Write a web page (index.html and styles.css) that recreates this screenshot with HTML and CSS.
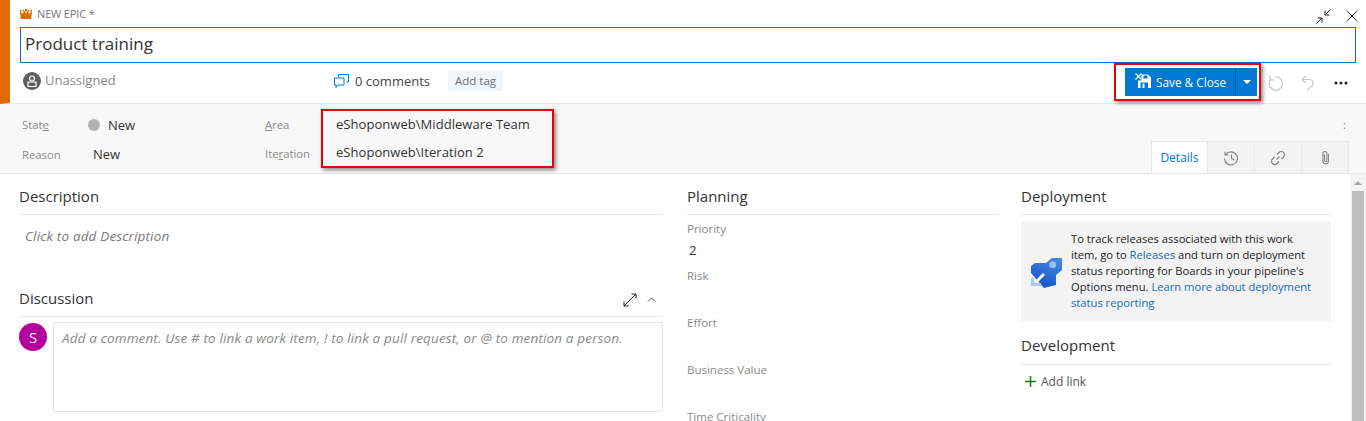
FILE: index.html
```html
<!DOCTYPE html>
<html lang="en">
<head>
<meta charset="utf-8">
<title>New Epic</title>
<link rel="stylesheet" href="styles.css">
</head>
<body>
<div class="page">
  <header class="header">
    <div class="toprow">
      <svg class="crown" width="12" height="10" viewBox="0 0 12 10"><path fill="#e06c00" d="M0 2.500L3 4.800 4 2 6 4 8 2 9 4.800 12 2.500 11.200 10H.8z"/><path fill="#e06c00" d="M5 0h2v2.500H5zM0 .8h1.500v2H0zM10.500 .8H12v2h-1.500zM2.800 .8h1.500v2H2.800zM7.700 .8h1.500v2H7.700z"/></svg>
      <span class="kind">NEW EPIC *</span>
      <span class="grow"></span>
      <svg class="winicon expandicon" width="15" height="15" viewBox="0 0 15 15"><path fill="none" stroke="#222" d="M14.500 .5L9 6M9 1.500V6h4.500M.5 14.500L6 9M1.500 9H6v4.500"/></svg>
      <svg class="winicon closeicon" width="12" height="12" viewBox="0 0 12 12"><path fill="none" stroke="#333" d="M.5.5l11 11M11.500.5l-11 11"/></svg>
    </div>
    <div class="title">Product training</div>
    <div class="metarow">
      <svg class="avatar" width="18" height="18" viewBox="0 0 18 18"><circle cx="9" cy="9" r="9" fill="#5f5f5f"/><circle cx="9" cy="6.500" r="2.500" fill="none" stroke="#fff" stroke-width="1.200"/><path fill="none" stroke="#fff" stroke-width="1.200" d="M5 10h8v4.500H5z"/></svg>
      <span class="assignee">Unassigned</span>
      <div class="comments">
        <svg width="15" height="15" viewBox="0 0 15 15"><path fill="#fff" stroke="#0078d4" d="M4.500 3V.5h10v7.500h-2"/><path fill="#fff" stroke="#0078d4" d="M.5 4h9.500v7H4l-2 2.500V11H.5z"/></svg>
        <span>0 comments</span>
      </div>
      <span class="tag">Add tag</span>
      <span class="grow"></span>
      <div class="savebtn">
        <span class="savemain">
          <svg class="saveicon" width="16" height="15" viewBox="0 0 16 15"><path fill="#fff" fill-rule="evenodd" d="M6.500 1.500H13L16 4.500V15H3V7.500H6.500zM8.500 2.500V5.500H12.500V2.500zM5.500 9.500V15H13V9.500zM7.500 10.500H9.500V15H7.500z"/><path fill="none" stroke="#fff" stroke-width="1.200" d="M.5.500l6 6M6.500.500l-6 6"/></svg>
          Save &amp; Close
        </span>
        <span class="savecaret"><i class="caret"></i></span>
      </div>
      <svg class="action" width="16" height="16" viewBox="0 0 16 16"><path fill="none" stroke="#c8c8c8" stroke-width="1.200" d="M3.500 4.500A6.700 6.700 0 1 0 8.500 1.800M3 .5v4.300h4.300"/></svg>
      <svg class="action" width="16" height="16" viewBox="0 0 16 16"><path fill="none" stroke="#c8c8c8" stroke-width="1.200" d="M6.500 1L3 4.500 6.500 8M3 4.500h7.500a3.800 3.800 0 0 1 2 7L8 15.500"/></svg>
      <svg class="action more" width="14" height="4" viewBox="0 0 14 4"><circle cx="2" cy="2" r="1.500" fill="#222"/><circle cx="7" cy="2" r="1.500" fill="#222"/><circle cx="12" cy="2" r="1.500" fill="#222"/></svg>
    </div>
  </header>

  <section class="band">
    <div class="fieldgrid">
      <span class="flabel">Stat<u>e</u></span>
      <span class="fvalue state"><i class="dot"></i>New</span>
      <span class="flabel"><u>A</u>rea</span>
      <span class="fvalue path path-area">eShoponweb\Middleware Team</span>
      <span class="flabel">Reason</span>
      <span class="fvalue reason">New</span>
      <span class="flabel flabel-iter">Ite<u>r</u>ation</span>
      <span class="fvalue path path-iter">eShoponweb\Iteration 2</span>
    </div>
    <div class="bandright">
      <span class="kebab">:</span>
      <div class="tabs">
        <span class="tab active">Details</span>
        <span class="tab"><svg width="16" height="16" viewBox="0 0 16 16"><path fill="none" stroke="#808080" stroke-width="1.100" d="M2.800 4.500A6.500 6.500 0 1 1 1.500 8.500M2 1.500v3.500h3.500M8.500 4.500v4l3 1.500"/></svg></span>
        <span class="tab"><svg width="16" height="16" viewBox="0 0 16 16"><path fill="none" stroke="#808080" stroke-width="1.100" d="M6.500 9.500l3-3M7 4.500l2-2a3 3 0 0 1 4.500 4.500l-2 2M9 11.500l-2 2A3 3 0 0 1 2.500 9l2-2"/></svg></span>
        <span class="tab"><svg width="9" height="14" viewBox="0 0 9 14"><path fill="none" stroke="#888" stroke-width="1.100" d="M3.500 3.500V9.500a1.200 1.200 0 0 0 2.400 0V2.500a2 2 0 0 0-4 0V10a2.800 2.800 0 0 0 5.600 0V3"/></svg></span>
      </div>
    </div>
  </section>

  <main class="main">
    <div class="col col-left">
      <h2 class="heading">Description</h2>
      <p class="desc">Click to add Description</p>
      <div class="heading discussion">
        <h2>Discussion</h2>
        <span class="grow"></span>
        <svg class="expand" width="14" height="14" viewBox="0 0 14 14"><path fill="none" stroke="#222" d="M13 1L1 13M8.500 1H13v4.500M1 8.500V13h4.500"/></svg>
        <svg class="chev" width="9" height="6" viewBox="0 0 9 6"><path fill="none" stroke="#555" d="M1 4.500L4.500 1 8 4.500"/></svg>
      </div>
      <div class="commentrow">
        <span class="usercircle">S</span>
        <div class="commentbox">Add a comment. Use # to link a work item, ! to link a pull request, or @ to mention a person.</div>
      </div>
    </div>

    <div class="col col-mid">
      <h2 class="heading">Planning</h2>
      <div class="plabel first">Priority</div>
      <div class="pvalue">2</div>
      <div class="plabel">Risk</div>
      <div class="pvalue"></div>
      <div class="plabel">Effort</div>
      <div class="pvalue"></div>
      <div class="plabel">Business Value</div>
      <div class="pvalue"></div>
      <div class="plabel">Time Criticality</div>
    </div>

    <div class="col col-right">
      <h2 class="heading">Deployment</h2>
      <div class="deploy">
        <svg class="rocket" width="31" height="31" viewBox="0 0 31 31">
          <defs><linearGradient id="rocketfill" x1="0.8" y1="0" x2="0.3" y2="1"><stop offset="0" stop-color="#4389e6"/><stop offset="1" stop-color="#1450c4"/></linearGradient></defs>
          <path fill="url(#rocketfill)" d="M4 6H15L21 1H31V13L25 18V28L13 31 7 24 0 16V9Z"/>
          <circle cx="21.700" cy="7.700" r="3.500" fill="#9cc0f2"/>
          <path fill="none" stroke="#f3f3f3" stroke-width="3" d="M2 28L13 17"/>
          <path fill="#a9c6f5" d="M0 21H3V26H10V29H0Z"/>
        </svg>
        <p>To track releases associated with this work item, go to <a>Releases</a> and turn on deployment status reporting for Boards in your pipeline's Options menu. <a>Learn more about deployment status reporting</a></p>
      </div>
      <h2 class="heading dev">Development</h2>
      <div class="addlink">
        <svg width="11" height="11" viewBox="0 0 11 11"><path fill="none" stroke="#107c10" stroke-width="1.500" d="M5.500 0v11M0 5.500h11"/></svg>
        <span>Add link</span>
      </div>
    </div>

    <div class="scrollbar"><i class="arrow"></i><div class="thumb"></div></div>
  </main>

  <div class="mark mark-fields"></div>
  <div class="mark mark-save"></div>
</div>
</body>
</html>
```
FILE: styles.css
```css
* { box-sizing: border-box; }
html, body { margin: 0; padding: 0; }
body {
  font-family: "Open Sans", "Noto Sans", "Liberation Sans", sans-serif;
  color: #333;
  background: #fff;
  overflow: hidden;
}
h2, p { margin: 0; font-weight: 400; }
.grow { flex: 1; }
.page { position: relative; width: 1366px; height: 421px; overflow: hidden; display: flex; flex-direction: column; }

.header { height: 104px; flex: none; border-left: 10px solid #e06c00; border-bottom: 1px solid #e8e8e8; padding: 0 10px; }
.toprow { height: 27px; display: flex; align-items: center; font-size: 11px; color: #767676; }
.crown { margin-right: 5px; margin-top: 1px; }
.kind { letter-spacing: -.15px; }
.winicon { margin-top: 5px; }
.expandicon { margin-right: 15px; }
.closeicon { margin-right: -2px; }
.title { height: 36px; border: 1px solid #0f6cbd; font-size: 17px; line-height: 32px; padding-left: 4px; color: #333; }
.metarow { height: 40px; display: flex; align-items: center; padding: 0 0 4px 3px; }
.assignee { font-size: 13px; color: #8a8a8a; margin: -2px 0 0 4px; width: 289px; }
.comments { display: flex; align-items: center; gap: 6px; font-size: 13px; color: #444; width: 114px; }
.tag { font-size: 11.500px; color: #6f6f6f; background: #eff6fc; padding: 0 7px; height: 20px; line-height: 20px; }
.savebtn { display: flex; height: 28px; background: #0078d4; color: #fff; font-size: 11.800px; margin-top: 2px; margin-right: 10px; }
.savemain { display: flex; align-items: center; gap: 5px; padding: 0 9px 1px 10px; border-right: 1px solid #005a9e; }
.saveicon { margin-top: -2px; }
.savecaret { width: 21px; display: flex; align-items: center; justify-content: center; }
.caret { width: 0; height: 0; border-left: 4.500px solid transparent; border-right: 4.500px solid transparent; border-top: 4.500px solid #fff; }
.action { margin-right: 16px; margin-top: 3px; }
.more { margin: 3px 8px 0 3px; }

.band { height: 70px; flex: none; background: #f8f8f8; border-bottom: 1px solid #e8e8e8; display: flex; justify-content: space-between; padding: 0 17px 0 22px; }
.fieldgrid { display: grid; grid-template-columns: 66px 177px 71px auto; grid-auto-rows: 30px; align-items: center; padding-top: 6px; }
.flabel { font-size: 11.300px; color: #8a8a8a; margin-bottom: 2px; }
.flabel-iter { margin-bottom: 4px; }
.fvalue { font-size: 13px; color: #333; }
.state { display: flex; align-items: center; gap: 8px; }
.dot { width: 12px; height: 12px; border-radius: 50%; background: #b2b2b2; }
.reason { padding-left: 5px; margin-bottom: 2px; }
.path { letter-spacing: .05px; }
.path-area { margin-bottom: 3px; }
.path-iter { margin-bottom: 7px; }
.bandright { display: flex; flex-direction: column; align-items: flex-end; justify-content: space-between; }
.kebab { font-size: 11px; color: #777; line-height: 14px; margin-top: 14px; margin-right: 3px; }
.tabs { display: flex; height: 32px; }
.tab { width: 47px; height: 32px; display: flex; align-items: center; justify-content: center; background: #f3f3f3; border: 1px solid #e8e8e8; border-bottom: 0; border-left: 0; }
.tab.active { width: 57px; background: #fff; color: #0078d4; font-size: 12px; border-left: 1px solid #e8e8e8; }

.main { flex: 1; display: flex; min-height: 0; padding-left: 19px; }
.col { flex: none; }
.col-left { width: 644px; margin-right: 24px; }
.col-mid { width: 311px; margin-right: 23px; }
.col-right { width: 310px; margin-right: 19px; }
.heading { display: block; height: 41px; padding-top: 11px; font-size: 15px; line-height: 22px; color: #333; border-bottom: 1px solid #e8e8e8; font-weight: 500; }
.desc { height: 61px; padding: 11px 0 0 6px; font-size: 13.500px; letter-spacing: .15px; line-height: 20px; font-style: italic; color: #7a7a7a; }
.discussion { display: flex; align-items: center; padding-top: 3px; }
.discussion h2 { font-size: 15px; font-weight: 500; }
.expand { margin-top: 5px; margin-right: 1px; }
.chev { margin: 5px 7px 0 9px; }
.commentrow { display: flex; gap: 6px; padding-top: 5px; }
.usercircle { flex: none; width: 28px; height: 28px; margin-top: 1px; border-radius: 50%; background: #b4009e; color: #fff; font-size: 15px; line-height: 28px; text-align: center; }
.commentbox { flex: 1; height: 90px; border: 1px solid #e3e3e3; border-radius: 3px; padding: 5px 8px; font-size: 13.500px; letter-spacing: .15px; line-height: 20px; font-style: italic; color: #8a8a8a; white-space: nowrap; }

.plabel { font-size: 11.500px; line-height: 16px; color: #8a8a8a; height: 16px; }
.plabel.first { margin-top: 6px; }
.pvalue { height: 31px; font-size: 13px; line-height: 24px; padding: 1px 0 0 2px; color: #333; }

.deploy { margin-top: 6px; height: 100px; background: #f3f3f3; display: flex; align-items: center; padding: 0 12px 0 10px; }
.rocket { flex: none; margin-right: 9px; margin-top: 3px; }
.deploy p { font-size: 11.200px; line-height: 16px; color: #222; }
.deploy a { color: #106ebe; }
.dev { margin-top: 2px; height: 42px; }
.addlink { display: flex; align-items: center; gap: 5px; font-size: 12px; color: #555; padding: 8px 0 0 4px; }

.scrollbar { flex: none; width: 16px; background: #f3f3f3; }
.arrow { display: block; width: 0; height: 0; margin: 7px auto 0; border-left: 4px solid transparent; border-right: 4px solid transparent; border-bottom: 4px solid #a8a8a8; }
.thumb { margin: 6px 2px 0; height: 300px; background: #bdbdbd; }

.mark { position: absolute; border: 2px solid #e8000d; box-shadow: 2px 2px 4px rgba(0,0,0,.45); }
.mark-fields { left: 321px; top: 109px; width: 233px; height: 59px; }
.mark-save { left: 1114px; top: 63px; width: 147px; height: 38px; }
```
